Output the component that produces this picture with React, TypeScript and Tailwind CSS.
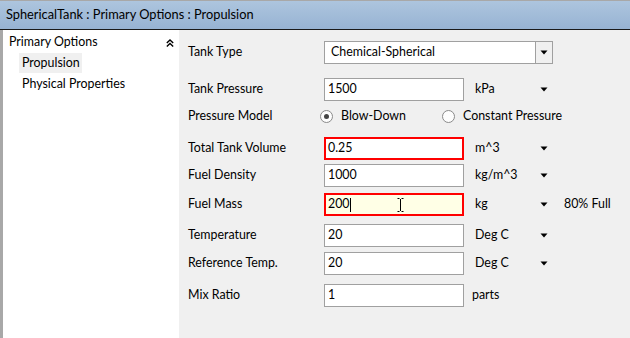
import React from 'react';

const font = { fontFamily: 'Lato, "Noto Sans", sans-serif' };

function Arrow() {
  return (
    <svg width="8" height="5" viewBox="0 0 8 5" className="block">
      <path d="M0.5 0.5 L7.5 0.5 L4 4.5 Z" fill="#000" />
    </svg>
  );
}

function Radio({ checked }: { checked?: boolean }) {
  return (
    <span className="flex items-center justify-center w-[13px] h-[13px] rounded-full border border-[#8a8a8a] bg-[#fdfdfd]">
      {checked && <span className="w-[5px] h-[5px] rounded-full bg-[#444]" />}
    </span>
  );
}

type Row = {
  label: string;
  value: string;
  unit: string;
  arrow?: boolean;
  error?: boolean;
  active?: boolean;
  extra?: string;
  mt: string;
};

const rows: Row[] = [
  { label: 'Total Tank Volume', value: '0.25', unit: 'm^3', arrow: true, error: true, mt: 'mt-[9px]' },
  { label: 'Fuel Density', value: '1000', unit: 'kg/m^3', arrow: true, mt: 'mt-[4px]' },
  { label: 'Fuel Mass', value: '200', unit: 'kg', arrow: true, error: true, active: true, extra: '80% Full', mt: 'mt-[6px]' },
  { label: 'Temperature', value: '20', unit: 'Deg C', arrow: true, mt: 'mt-[8px]' },
  { label: 'Reference Temp.', value: '20', unit: 'Deg C', arrow: true, mt: 'mt-[5px]' },
  { label: 'Mix Ratio', value: '1', unit: 'parts', mt: 'mt-[9px]' },
];

function Field({ row }: { row: Row }) {
  return (
    <div className={`flex items-center h-[23px] ${row.mt}`}>
      <div className="w-[136px] shrink-0">{row.label}</div>
      <div
        className={`relative flex items-center w-[140px] h-[23px] shrink-0 ${
          row.error ? 'border-2 border-[#ff0000] px-[2px]' : 'border border-[#a0a0a0] px-[3px]'
        } ${row.active ? 'bg-[#ffffe6]' : 'bg-white'}`}
      >
        {row.value}
        {row.active && (
          <>
            <span className="w-px h-[14px] bg-black" />
            <svg className="absolute left-[71px] top-[3px]" width="7" height="14" viewBox="0 0 7 14">
              <path d="M0.5 0.5 H2.5 M4.5 0.5 H6.5 M3.5 1 V13 M0.5 13.5 H2.5 M4.5 13.5 H6.5" stroke="#000" fill="none" />
            </svg>
          </>
        )}
      </div>
      <div className={`w-[76px] shrink-0 ${row.unit === 'parts' ? 'pl-[8px]' : 'pl-[11px]'}`}>{row.unit}</div>
      <div className="w-[24px] shrink-0">{row.arrow && <Arrow />}</div>
      {row.extra && <div>{row.extra}</div>}
    </div>
  );
}

export default function App() {
  return (
    <div className="w-[630px] h-[338px] overflow-hidden flex flex-col text-[12.4px] text-black bg-[#f0f0f0]" style={font}>
      <div className="h-[30px] shrink-0 flex items-center pl-[6px] border-t border-[#a8a8a8] border-b border-b-[#1a1a1a] bg-gradient-to-b from-[#adc5de] to-[#97b3d3] text-[12.8px]">
        SphericalTank : Primary Options : Propulsion
      </div>
      <div className="flex flex-1 min-h-0">
        <div className="w-[3px] bg-[#a8a8a8]" />
        <div className="w-[176px] bg-white relative">
          <div className="flex items-center justify-between pl-[6px] pr-[5px] mt-[5px] h-[15px]">
            <span>Primary Options</span>
            <svg width="8" height="8" viewBox="0 0 8 8">
              <path d="M0.8 4 L4 1 L7.2 4 M0.8 7.5 L4 4.5 L7.2 7.5" stroke="#000" strokeWidth="1.4" fill="none" />
            </svg>
          </div>
          <div className="ml-[16px] mt-[3px] w-[63px] h-[20px] flex items-center pl-[3px] bg-[#f0f0f0]">Propulsion</div>
          <div className="ml-[19px] mt-[1px] h-[20px] flex items-center">Physical Properties</div>
        </div>
        <div className="flex-1 pl-[9px] pt-[11px]">
          <div className="flex items-center h-[23px]">
            <div className="w-[136px] shrink-0">Tank Type</div>
            <div className="flex w-[229px] h-[23px] border border-[#a0a0a0] bg-white">
              <div className="flex-1 flex items-center pl-[6px]">Chemical-Spherical</div>
              <div className="w-[17px] border-l border-[#a0a0a0] bg-[#f0f0f0] flex items-center justify-center">
                <Arrow />
              </div>
            </div>
          </div>
          <Field row={{ label: 'Tank Pressure', value: '1500', unit: 'kPa', arrow: true, mt: 'mt-[14px]' }} />
          <div className="flex items-center h-[24px] mt-[3px]">
            <div className="w-[132px] shrink-0">Pressure Model</div>
            <Radio checked />
            <span className="ml-[8px] w-[101px]">Blow-Down</span>
            <Radio />
            <span className="ml-[8px]">Constant Pressure</span>
          </div>
          {rows.map((r) => (
            <Field key={r.label} row={r} />
          ))}
        </div>
      </div>
    </div>
  );
}
